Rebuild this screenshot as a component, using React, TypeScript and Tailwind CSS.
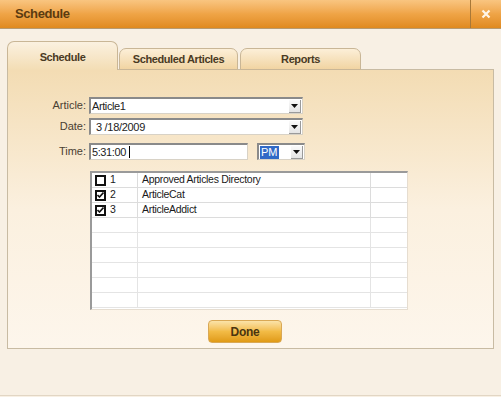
import { Fragment } from "react";

type Row = { id: number; name: string; checked: boolean };

const rows: Row[] = [
  { id: 1, name: "Approved Articles Directory", checked: false },
  { id: 2, name: "ArticleCat", checked: true },
  { id: 3, name: "ArticleAddict", checked: true },
];

const font = { fontFamily: '"Liberation Sans", Arial, sans-serif' };

function DropArrow() {
  return (
    <div className="ml-auto mr-[1px] flex h-[13px] w-[12px] items-center justify-center border-r border-b border-[#9a9a9a] bg-gradient-to-b from-[#fafafa] to-[#e4e4e4]">
      <svg width="7" height="4" viewBox="0 0 7 4">
        <path d="M0 0h7L3.5 4z" fill="#111" />
      </svg>
    </div>
  );
}

function Field({ children, className }: { children: React.ReactNode; className: string }) {
  return (
    <div
      className={`flex h-[17px] items-center border-t-2 border-l-2 border-t-[#8a8a8a] border-l-[#8a8a8a] border-r border-b border-r-[#d8d2c6] border-b-[#d8d2c6] bg-white ${className}`}
    >
      {children}
    </div>
  );
}

function Check({ on }: { on: boolean }) {
  return (
    <div className="flex h-[11px] w-[11px] items-center justify-center border-2 border-[#111] bg-white">
      {on && (
        <svg width="7" height="6" viewBox="0 0 7 6">
          <path d="M0.5 3l2 2L6.5 0.5" stroke="#111" strokeWidth="1.6" fill="none" />
        </svg>
      )}
    </div>
  );
}

export default function App() {
  const empty = Array.from({ length: 6 }, (_, i) => i);

  return (
    <div className="flex h-[397px] w-[501px] flex-col bg-[#f8f0e4]" style={font}>
      <div className="flex h-[29px] border-b border-[#b89a70] bg-gradient-to-b from-[#f9c580] via-[#efa446] to-[#e08a1e]">
        <div className="flex flex-1 items-center pl-[15px] text-[13px] font-bold tracking-[-0.4px] text-[#5b3b10]">
          Schedule
        </div>
        <div className="flex w-[31px] items-center justify-center border-l border-[#a87838]">
          <svg width="10" height="10" viewBox="0 0 10 10">
            <path d="M1.5 1.5l7 7M8.5 1.5l-7 7" stroke="#fff6e8" strokeWidth="2.2" />
          </svg>
        </div>
      </div>

      <div className="px-[7px] pt-[12px]">
        <div className="relative z-10 -mb-px flex h-[29px] items-end text-[11px] font-bold tracking-[-0.4px] text-[#4a3a24]">
          <div className="flex h-[29px] w-[111px] items-start justify-center rounded-t-[7px] border border-b-0 border-[#c9b696] bg-gradient-to-b from-[#fbf1e0] to-[#f3ddb4] pt-[7px]">
            Schedule
          </div>
          <div className="ml-[1px] flex h-[22px] w-[119px] items-center justify-center rounded-t-[7px] border border-[#c9b696] bg-gradient-to-b from-[#fcefd8] to-[#f1d4a2] pt-[1px]">
            Scheduled Articles
          </div>
          <div className="ml-[2px] flex h-[22px] w-[121px] items-center justify-center rounded-t-[7px] border border-[#c9b696] bg-gradient-to-b from-[#fcefd8] to-[#f1d4a2] pt-[1px]">
            Reports
          </div>
        </div>

        <div className="h-[280px] border border-[#c8bba3] bg-gradient-to-b from-[#f3dcb3] via-[#fbf0df] to-[#fdf6ec] pt-[27px] text-[11px] text-[#222]">
          <div className="flex items-center">
            <div className="w-[78px] text-right text-[#4a4032]">Article:</div>
            <Field className="ml-[3px] w-[214px]">
              <span className="pl-[1px] tracking-[-0.4px]">Article1</span>
              <DropArrow />
            </Field>
          </div>
          <div className="mt-[4px] flex items-center">
            <div className="w-[78px] text-right text-[#4a4032]">Date:</div>
            <Field className="ml-[3px] w-[214px]">
              <span className="pl-[5px] tracking-[-0.3px]">3 /18/2009</span>
              <DropArrow />
            </Field>
          </div>
          <div className="mt-[8px] flex items-center">
            <div className="w-[78px] text-right text-[#4a4032]">Time:</div>
            <Field className="ml-[3px] w-[159px]">
              <span className="pl-[1px] tracking-[-0.4px]">5:31:00</span>
              <span className="ml-[3px] h-[12px] w-px bg-black" />
            </Field>
            <Field className="ml-[9px] w-[48px]">
              <span className="ml-[1px] bg-[#3169c6] px-[1px] text-[11px] leading-[13px] text-white">PM</span>
              <DropArrow />
            </Field>
          </div>

          <div className="ml-[82px] mt-[11px] h-[139px] w-[318px] border-t-2 border-l-2 border-t-[#9a9a9a] border-l-[#9a9a9a] border-r border-b border-r-[#e6ddd0] border-b-[#e6ddd0] bg-white text-[10.5px] tracking-[-0.3px] text-[#1a1a1a]">
            <div className="grid grid-cols-[46px_233px_1fr]">
              {rows.map((r) => (
                <Fragment key={r.id}>
                  <div className="flex h-[15px] items-center gap-[4px] border-r border-b border-[#dcdcdc] pl-[3px]">
                    <Check on={r.checked} />
                    <span>{r.id}</span>
                  </div>
                  <div className="flex h-[15px] items-center border-r border-b border-[#dcdcdc] pl-[4px]">
                    {r.name}
                  </div>
                  <div className="h-[15px] border-b border-[#dcdcdc]" />
                </Fragment>
              ))}
              {empty.map((i) => (
                <Fragment key={i}>
                  <div className="h-[15px] border-r border-b border-[#e4e4e4]" />
                  <div className="h-[15px] border-r border-b border-[#e4e4e4]" />
                  <div className="h-[15px] border-b border-[#e4e4e4]" />
                </Fragment>
              ))}
            </div>
          </div>

          <div className="ml-[200px] mt-[10px] flex h-[23px] w-[74px] items-center justify-center rounded-[4px] border border-[#d9a855] bg-gradient-to-b from-[#fbe3a8] via-[#f2bb45] to-[#e09a12] text-[12px] font-bold tracking-[-0.3px] text-[#4a3510]">
            Done
          </div>
        </div>
      </div>
      <div className="mt-auto h-[2px] border-t border-[#e2d6c4]" />
    </div>
  );
}
